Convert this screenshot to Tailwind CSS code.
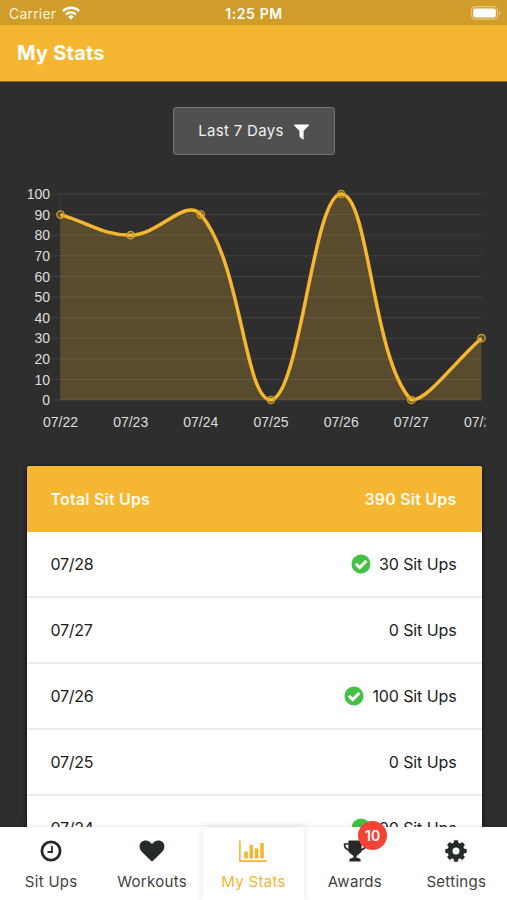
<!DOCTYPE html>
<html lang="en">
<head>
    <meta charset="UTF-8">
    <meta name="viewport" content="width=device-width, initial-scale=1.0">
    <title>My Stats</title>
    <script src="https://cdn.jsdelivr.net/npm/@tailwindcss/browser@4"></script>
</head>
<body class="h-[900px] w-[507px] overflow-hidden bg-[#2e2e2e] font-['Inter',sans-serif]">
    <div class="relative flex h-[900px] flex-col overflow-hidden">
        <!-- Status bar -->
        <div class="grid h-[25px] shrink-0 grid-cols-3 items-center bg-[#d09c2a] pt-[3px] pr-[5px] pl-[9px] text-[14px] leading-none text-white">
            <div class="flex items-center gap-[6px] text-[#fff3d8]">
                <span class="tracking-[0.2px]">Carrier</span>
                <svg class="mb-[2px] h-[14px] w-[18px]" viewBox="0 0 18 14" fill="none" stroke="white" stroke-width="2.3">
                    <path d="M.9 5.1a11.5 11.5 0 0 1 16.2 0M4 8.5a7.1 7.1 0 0 1 10 0" />
                    <path d="M9 13.6 6.1 10.7a4.1 4.1 0 0 1 5.8 0z" fill="white" stroke="none" />
                </svg>
            </div>
            <div class="-ml-[3px] text-center font-semibold tracking-[0.6px]">1:25 PM</div>
            <div class="flex justify-end">
                <svg class="mb-[2px] h-[14px] w-[32px]" viewBox="0 0 32 14">
                    <rect x="1.5" y=".7" width="26" height="12.4" rx="3.8" fill="none" stroke="#e6c683" stroke-width="1.2" />
                    <rect x="3.2" y="2.4" width="22.6" height="9" rx="2.2" fill="white" />
                    <path d="M29 5v4c1.8-.6 1.8-3.4 0-4z" fill="#e6c683" />
                </svg>
            </div>
        </div>

        <!-- Header -->
        <header class="flex h-[57px] shrink-0 items-center border-b border-[#83692f] bg-[#f5b731] px-[17px]">
            <h1 class="text-[20px] font-bold tracking-[0.2px] text-white">My Stats</h1>
        </header>

        <main class="flex flex-col items-center">
            <button class="mt-[25px] flex h-12 w-[162px] items-center justify-center gap-[10px] rounded-[3px] border border-[#757575] bg-[#505050] pt-px text-[15px] tracking-[0.3px] text-[#f0f0f0]">
                Last 7 Days
                <svg class="h-4 w-[15px]" viewBox="0 0 15 16" fill="white"><path d="M.6.5h13.8c.6 0 .8.6.4 1L9.600 7v8c0 .6-.5.8-.9.4L5.900 13a1 1 0 0 1-.4-.7V7L.2 1.500C-.2 1.100 0 .5.6.5z" /></svg>
            </button>

            <svg id="chart" class="mt-[25px] h-[260px] w-[507px] font-['Liberation_Sans',sans-serif] text-[14px]" viewBox="0 180 507 260"></svg>

            <section class="mt-[26px] ml-px w-[455px] rounded-[3px] bg-white shadow-[0_1px_5px_rgba(0,0,0,0.75)]">
                <div class="flex h-[66px] items-center justify-between rounded-t-[3px] bg-[#f5b731] pr-[25px] pl-[24px] text-[16px] font-semibold tracking-[0.2px] text-[#fffaf0]">
                    <span>Total Sit Ups</span>
                    <span>390 Sit Ups</span>
                </div>
                <div id="rows"></div>
            </section>
        </main>

        <!-- Tab bar -->
        <nav class="absolute inset-x-0 bottom-0 grid h-[73px] grid-cols-5 bg-white text-[15px] leading-[22px] tracking-[0.3px] text-[#3f3f3f] shadow-[0_-1px_5px_rgba(0,0,0,0.08)]">
            <div class="flex flex-col items-center pt-[12px] pl-px">
                <svg class="h-6 w-[26px]" viewBox="0 0 26 24" fill="none" stroke="#272a2b">
                    <circle cx="13" cy="12" r="9.100" stroke-width="2.8" />
                    <path d="M14 7v6H9.500" stroke-width="1.8" />
                </svg>
                <span class="mt-[8px]">Sit Ups</span>
            </div>
            <div class="flex flex-col items-center pt-[12px]">
                <svg class="h-6 w-[26px]" viewBox="0 0 26 24" fill="#272a2b"><path d="M13 22.200c-.3 0-.6-.1-.8-.3L3.300 13.200C1.400 11.300.6 9.400.6 7.400.6 3.700 3 1.500 6.900 1.500c2.300 0 4.500 1.800 6.100 3.500 1.600-1.700 3.800-3.500 6.100-3.500 3.900 0 6.300 2.200 6.300 5.900 0 2-.8 3.900-2.700 5.800l-8.900 8.700c-.2.2-.5.3-.8.3z" /></svg>
                <span class="mt-[8px]">Workouts</span>
            </div>
            <div class="flex flex-col items-center bg-white pt-[12px] text-[#f5b731] shadow-[0_0_7px_rgba(0,0,0,0.11)]">
                <svg class="h-6 w-[30px]" viewBox="0 0 30 24" fill="#f5b731">
                    <path d="M1.100 1.500h1.600v19.800h26.200v1.600H1.100zM6.200 12.500h3.600v7H6.200zM11.500 6h3.600v13.500h-3.600zM16.800 9.500h3.600v10h-3.600zM22.200 4h3.600v15.500h-3.600z" />
                </svg>
                <span class="mt-[8px]">My Stats</span>
            </div>
            <div class="relative flex flex-col items-center pt-[12px]">
                <svg class="h-6 w-[26px]" viewBox="0 0 26 24" fill="#272a2b">
                    <path d="M7.200 1.500h11.600c.5 0 .8.4.8.8v10.200c-1.200 2-3.300 2.900-4.600 3.900-.7.7-.7 1.700 0 2.300 1.600.3 3.600.7 3.600 2v1.800H7.400v-1.800c0-1.300 2-1.700 3.600-2 .7-.6.7-1.600 0-2.300-1.300-1-3.400-1.900-4.600-3.900V2.300c0-.4.3-.8.8-.8z" />
                    <path d="M7 5H2.600v1.500c0 2.700 3.200 5 7.400 5.400M19 5h4.400v1.500c0 2.700-3.200 5-7.400 5.400" fill="none" stroke="#272a2b" stroke-width="1.700" />
                </svg>
                <span class="mt-[8px]">Awards</span>
                <span class="absolute top-[-6px] left-[54px] flex size-[29px] items-center justify-center rounded-full bg-[#f44336] text-[14px] font-semibold tracking-normal text-white">10</span>
            </div>
            <div class="flex flex-col items-center pt-[12px]">
                <svg id="gear" class="h-6 w-[26px]" viewBox="0 0 26 24">
                    <circle cx="13" cy="12" r="6" fill="none" stroke="#272a2b" stroke-width="5" />
                </svg>
                <span class="mt-[8px]">Settings</span>
            </div>
        </nav>
    </div>

    <script>
        const stats = [
            { day: '07/22', count: 90 },
            { day: '07/23', count: 80 },
            { day: '07/24', count: 90 },
            { day: '07/25', count: 0 },
            { day: '07/26', count: 100 },
            { day: '07/27', count: 0 },
            { day: '07/28', count: 30 }
        ];
        const visibleRows = 5;

        const left = 60.5, right = 481.5, top_ = 194, bottom = 400;
        const points = stats.map((s, i) => ({
            x: left + i * (right - left) / (stats.length - 1),
            y: bottom - s.count / 100 * (bottom - top_)
        }));

        // Smoothed control points, kept inside the plot area
        function controls(i) {
            const prev = points[i - 1] || points[i];
            const cur = points[i];
            const next = points[i + 1] || cur;
            const d0 = Math.hypot(cur.x - prev.x, cur.y - prev.y);
            const d1 = Math.hypot(next.x - cur.x, next.y - cur.y);
            const a = 0.4 * d0 / (d0 + d1);
            const b = 0.4 * d1 / (d0 + d1);
            const cap = y => Math.max(top_, Math.min(bottom, y));
            return {
                before: [cur.x - a * (next.x - prev.x), cap(cur.y - a * (next.y - prev.y))],
                after: [cur.x + b * (next.x - prev.x), cap(cur.y + b * (next.y - prev.y))]
            };
        }

        let line = `M${points[0].x} ${points[0].y}`;
        for (let i = 1; i < points.length; i++) {
            line += `C${controls(i - 1).after} ${controls(i).before} ${points[i].x} ${points[i].y}`;
        }

        let svg = `<path d="M${left} ${top_}V${bottom}" stroke="#3b3b3b" />`;
        for (let v = 0; v <= 100; v += 10) {
            const y = bottom - v / 100 * (bottom - top_);
            svg += `<path d="M51 ${y}H${right}" stroke="#414141" />
                <text x="50" y="${y + 5.2}" text-anchor="end" fill="#dedede">${v}</text>`;
        }
        svg += `<path d="${line}V${bottom}H${left}Z" fill="#f5b731" fill-opacity="0.22" />
            <path d="${line}" fill="none" stroke="#f5b731" stroke-width="3.5" />`;
        points.forEach((p, i) => {
            svg += `<circle cx="${p.x}" cy="${p.y}" r="3.700" fill="#f5b731" fill-opacity="0.2" stroke="#d09b2c" stroke-width="1.3" />
                <text x="${p.x}" y="426.500" text-anchor="middle" fill="#dedede">${stats[i].day}</text>`;
        });
        // The last label is cut off at the edge of the canvas
        svg += `<rect x="485.500" y="405" width="22" height="30" fill="#2e2e2e" />`;
        document.getElementById('chart').innerHTML = svg;

        const check = `<svg class="size-[20px]" viewBox="0 0 20 20">
            <circle cx="10" cy="10" r="9.500" fill="#43c143" />
            <path d="M4.800 9.700l3.900 3.900 6.700-6.700" fill="none" stroke="white" stroke-width="3" />
        </svg>`;
        document.getElementById('rows').innerHTML = stats.slice().reverse().slice(0, visibleRows).map(s => `
            <div class="flex h-[66px] items-center justify-between border-b-2 border-[#ebebeb] pr-[25px] pl-[24px] text-[16px] text-[#1c1c1c]">
                <span class="tracking-[-0.3px]">${s.day}</span>
                <span class="flex items-center gap-[8px] tracking-[-0.1px]">${s.count ? check : ''}${s.count} Sit Ups</span>
            </div>
        `).join('');

        let teeth = '';
        for (let i = 0; i < 8; i++) {
            teeth += `<rect x="10.800" y="1.300" width="4.400" height="5" rx="1" fill="#272a2b" transform="rotate(${i * 45} 13 12)" />`;
        }
        document.getElementById('gear').innerHTML += teeth;
    </script>
</body>
</html>
